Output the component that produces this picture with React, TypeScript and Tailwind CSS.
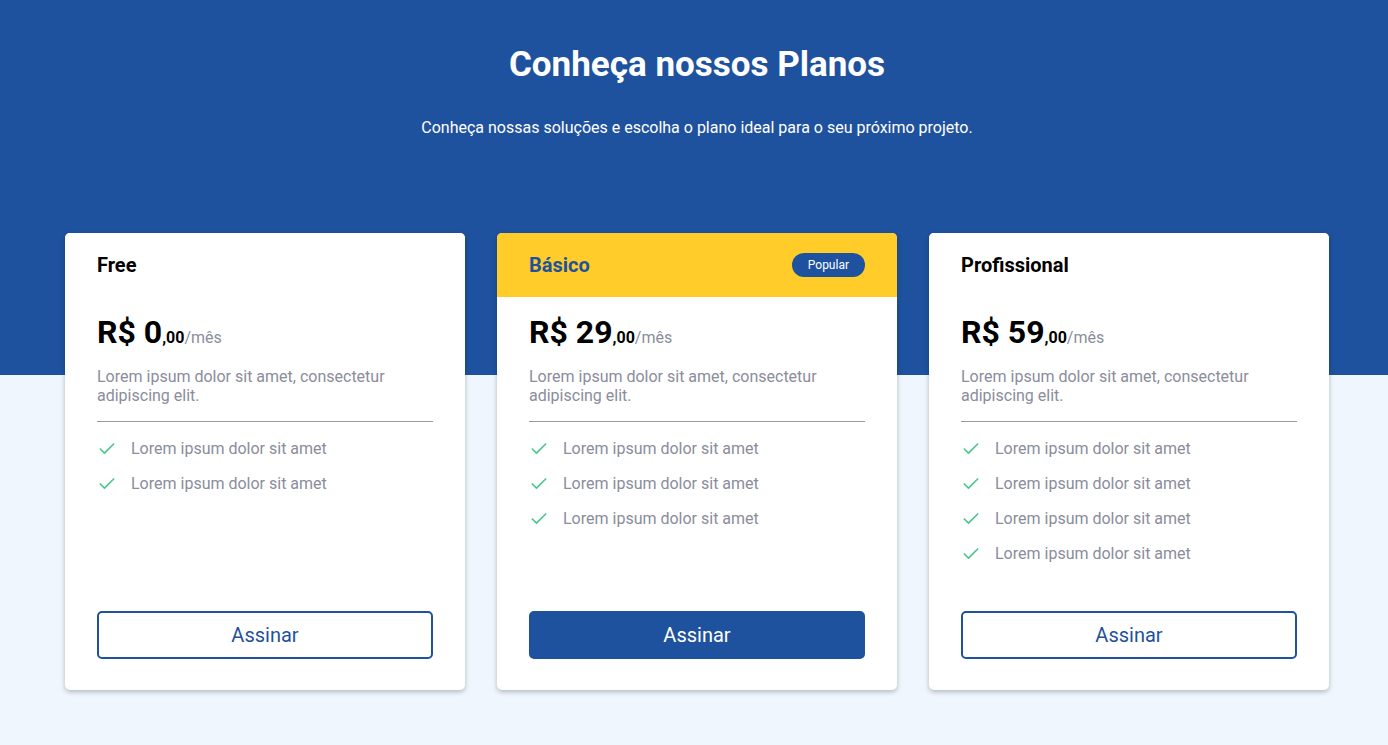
import { Check } from 'lucide-react';

type Plan = {
  name: string;
  price: string;
  features: number;
  popular?: boolean;
};

const plans: Plan[] = [
  { name: 'Free', price: '0', features: 2 },
  { name: 'Básico', price: '29', features: 3, popular: true },
  { name: 'Profissional', price: '59', features: 4 },
];

function PlanCard({ plan }: { plan: Plan }) {
  return (
    <div className="w-[400px] h-[457px] bg-white rounded-[5px] shadow-[0_2px_5px_rgba(0,0,0,0.25)] flex flex-col overflow-hidden">
      <div
        className={`h-16 px-8 flex items-center justify-between ${
          plan.popular ? 'bg-[#ffcc29]' : 'bg-white'
        }`}
      >
        <h2 className={`text-xl font-bold ${plan.popular ? 'text-[#1f529e]' : 'text-black'}`}>{plan.name}</h2>
        {plan.popular && (
          <span className="bg-[#1f529e] text-white text-xs px-4 h-6 leading-6 rounded-full">Popular</span>
        )}
      </div>
      <div className="flex-1 flex flex-col px-8 pt-[17px] pb-[31px]">
        <div className="flex items-baseline text-black">
          <span className="text-[32px] leading-9 font-bold">R$ {plan.price}</span>
          <span className="text-base font-bold">,00</span>
          <span className="text-base text-[#8a8d9b]">/mês</span>
        </div>
        <p className="mt-[17px] text-base leading-[19px] text-[#8a8d9b]">
          Lorem ipsum dolor sit amet, consectetur adipiscing elit.
        </p>
        <hr className="mt-4 border-t border-[#9a9a9a]" />
        <ul className="mt-[15px] flex flex-col gap-[11px]">
          {Array.from({ length: plan.features }).map((_, i) => (
            <li key={i} className="flex items-center gap-[14px] h-6 text-base text-[#8a8d9b]">
              <Check size={20} strokeWidth={2} className="text-[#4cc790]" />
              Lorem ipsum dolor sit amet
            </li>
          ))}
        </ul>
        <button
          className={`mt-auto h-12 rounded-[5px] text-xl border-2 border-[#1f529e] ${
            plan.popular ? 'bg-[#1f529e] text-white' : 'bg-white text-[#1f529e]'
          }`}
        >
          Assinar
        </button>
      </div>
    </div>
  );
}

export default function App() {
  return (
    <div
      className="min-h-[745px] bg-[linear-gradient(to_bottom,#1f529e_375px,#eff6fe_375px)] flex flex-col items-center pl-[6px] pt-[45px] pb-14"
      style={{ fontFamily: 'Roboto, "Noto Sans", sans-serif' }}
    >
      <h1 className="text-[35px] font-bold text-white leading-10">Conheça nossos Planos</h1>
      <p className="mt-[31px] text-base leading-6 text-white">
        Conheça nossas soluções e escolha o plano ideal para o seu próximo projeto.
      </p>
      <div className="mt-[93px] flex gap-8">
        {plans.map((p) => (
          <PlanCard key={p.name} plan={p} />
        ))}
      </div>
    </div>
  );
}
